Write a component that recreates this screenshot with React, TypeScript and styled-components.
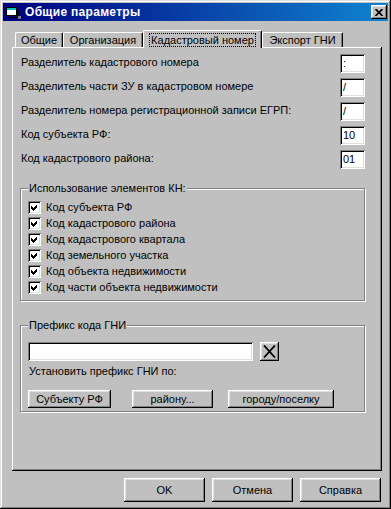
import styled, { createGlobalStyle } from 'styled-components'

const GlobalStyle = createGlobalStyle`
  html, body {
    margin: 0;
    padding: 0;
    background: #c0c0c0;
  }
  body {
    font-family: "Liberation Sans", Arial, sans-serif;
    font-size: 11px;
    color: #000;
  }
`

const raised = `
  box-shadow: inset -1px -1px 0 #000, inset 1px 1px 0 #fff,
    inset -2px -2px 0 #808080, inset 2px 2px 0 #dfdfdf;
`

const sunken = `
  box-shadow: inset 1px 1px 0 #808080, inset -1px -1px 0 #fff,
    inset 2px 2px 0 #000, inset -2px -2px 0 #dfdfdf;
`

const Window = styled.div`
  width: 391px;
  height: 509px;
  box-sizing: border-box;
  padding: 3px;
  background: #c0c0c0;
  box-shadow: inset -1px -1px 0 #000, inset 1px 1px 0 #dfdfdf,
    inset -2px -2px 0 #808080, inset 2px 2px 0 #fff;
  display: flex;
  flex-direction: column;
`

const TitleBar = styled.div`
  height: 18px;
  display: flex;
  align-items: center;
  padding: 0 1px 0 2px;
  background: linear-gradient(90deg, #000080, #1084d0);
  color: #fff;
`

const TitleText = styled.span`
  margin-left: 4px;
  font-weight: bold;
  font-size: 12px;
  letter-spacing: 0.3px;
`

const CloseButton = styled.div`
  margin-left: auto;
  width: 16px;
  height: 14px;
  background: #c0c0c0;
  ${raised}
  display: flex;
  align-items: center;
  justify-content: center;
`

const Body = styled.div`
  flex: 1;
  display: flex;
  flex-direction: column;
  padding: 9px 6px 0 9px;
`

const TabStrip = styled.div`
  height: 17px;
  display: flex;
  align-items: flex-end;
  padding-left: 3px;
  position: relative;
  z-index: 1;
`

const Tab = styled.div<{ $w: number; $active?: boolean }>`
  width: ${p => p.$w}px;
  box-sizing: border-box;
  height: ${p => (p.$active ? 18 : 15)}px;
  margin-bottom: ${p => (p.$active ? -1 : 0)}px;
  padding-top: ${p => (p.$active ? 2 : 0)}px;
  line-height: 14px;
  text-align: center;
  white-space: nowrap;
  background: #c0c0c0;
  border-top: 1px solid #fff;
  border-left: 1px solid #fff;
  border-right: 1px solid #000;
  border-radius: 2px 2px 0 0;
  box-shadow: inset -1px 0 0 #808080;
`

const FocusText = styled.span`
  outline: 1px dotted #000;
  padding: 0 1px;
`

const Panel = styled.div`
  width: 370px;
  height: 424px;
  box-sizing: border-box;
  padding: 7px 17px 0 8px;
  box-shadow: inset -1px -1px 0 #000, inset 1px 1px 0 #fff,
    inset -2px -2px 0 #808080;
  display: flex;
  flex-direction: column;
`

const FieldRow = styled.div`
  height: 24px;
  display: flex;
  align-items: flex-start;
  justify-content: space-between;
`

const FieldLabel = styled.span`
  padding: 2px 0 0 1px;
  line-height: 13px;
`

const SmallInput = styled.div`
  width: 25px;
  height: 19px;
  box-sizing: border-box;
  padding: 0 0 0 3px;
  line-height: 19px;
  color: #000;
  background: #fff;
  ${sunken}
`

const Group = styled.fieldset<{ $mt: number; $pt: number; $pb: number }>`
  margin: ${p => p.$mt}px 0 0 0;
  padding: ${p => p.$pt}px 7px ${p => p.$pb}px 7px;
  border: 1px solid #808080;
  box-shadow: 1px 1px 0 #fff, inset 1px 1px 0 #fff;
  min-width: 0;
`

const Legend = styled.legend`
  padding: 0 1px;
  line-height: 13px;
  background: #c0c0c0;
`

const CheckRow = styled.div`
  height: 16px;
  display: flex;
  align-items: center;
  gap: 5px;
`

const CheckBox = styled.div`
  width: 13px;
  height: 13px;
  background: #fff;
  ${sunken}
  display: flex;
`

const PrefixRow = styled.div`
  display: flex;
  gap: 7px;
`

const WideInput = styled.div`
  width: 225px;
  height: 19px;
  background: #fff;
  ${sunken}
`

const IconButton = styled.div`
  width: 19px;
  height: 19px;
  background: #c0c0c0;
  ${raised}
  display: flex;
  align-items: center;
  justify-content: center;
`

const Hint = styled.div`
  margin-top: 4px;
  padding-left: 1px;
  line-height: 13px;
`

const ButtonRow = styled.div`
  margin-top: 12px;
  display: flex;
`

const Button = styled.div<{ $w: number; $h: number; $ml?: number }>`
  width: ${p => p.$w}px;
  height: ${p => p.$h}px;
  margin-left: ${p => p.$ml ?? 0}px;
  line-height: ${p => p.$h}px;
  text-align: center;
  background: #c0c0c0;
  ${raised}
`

const Footer = styled.div`
  margin-top: 7px;
  display: flex;
  justify-content: flex-end;
  gap: 7px;
  padding-right: 1px;
`

const fields = [
  { label: 'Разделитель кадастрового номера', value: ':' },
  { label: 'Разделитель части ЗУ в кадастровом номере', value: '/' },
  { label: 'Разделитель номера регистрационной записи ЕГРП:', value: '/' },
  { label: 'Код субъекта РФ:', value: '10' },
  { label: 'Код кадастрового района:', value: '01' },
]

const checks = [
  'Код субъекта РФ',
  'Код кадастрового района',
  'Код кадастрового квартала',
  'Код земельного участка',
  'Код объекта недвижимости',
  'Код части объекта недвижимости',
]

const AppIcon = () => (
  <svg width="16" height="16" viewBox="0 0 16 16" shapeRendering="crispEdges">
    <rect x="1.5" y="3.5" width="10" height="8" fill="#fff" stroke="#000" />
    <rect x="2" y="4" width="9" height="2" fill="#00c0c0" />
    <path d="M4 13.5 H13.5 V6" stroke="#000" fill="none" />
    <rect x="13" y="12" width="3" height="3" fill="#808080" />
  </svg>
)

const Check = () => (
  <svg width="13" height="13" viewBox="0 0 13 13" shapeRendering="crispEdges">
    <polygon points="3,5 5,7 9,3 9,6 5,10 3,8" fill="#000" />
  </svg>
)

const App = () => (
  <>
    <GlobalStyle />
    <Window>
      <TitleBar>
        <AppIcon />
        <TitleText>Общие параметры</TitleText>
        <CloseButton>
          <svg width="8" height="7" viewBox="0 0 8 7">
            <path d="M0.5 0 L7.5 7 M7.5 0 L0.5 7" stroke="#000" strokeWidth="1.7" />
          </svg>
        </CloseButton>
      </TitleBar>
      <Body>
        <TabStrip>
          <Tab $w={48}>Общие</Tab>
          <Tab $w={80}>Организация</Tab>
          <Tab $w={119} $active>
            <FocusText>Кадастровый номер</FocusText>
          </Tab>
          <Tab $w={81}>Экспорт ГНИ</Tab>
        </TabStrip>
        <Panel>
          {fields.map(f => (
            <FieldRow key={f.label}>
              <FieldLabel>{f.label}</FieldLabel>
              <SmallInput>{f.value}</SmallInput>
            </FieldRow>
          ))}
          <Group $mt={8} $pt={4} $pb={5}>
            <Legend>Использование элементов КН:</Legend>
            {checks.map(c => (
              <CheckRow key={c}>
                <CheckBox>
                  <Check />
                </CheckBox>
                {c}
              </CheckRow>
            ))}
          </Group>
          <Group $mt={18} $pt={10} $pb={3}>
            <Legend>Префикс кода ГНИ</Legend>
            <PrefixRow>
              <WideInput />
              <IconButton>
                <svg width="13" height="13" viewBox="0 0 13 13">
                  <path d="M1 0.5 L12 12.5 M12 0.5 L1 12.5" stroke="#000" strokeWidth="1.8" />
                </svg>
              </IconButton>
            </PrefixRow>
            <Hint>Установить префикс ГНИ по:</Hint>
            <ButtonRow>
              <Button $w={83} $h={18}>Субъекту РФ</Button>
              <Button $w={81} $h={18} $ml={21}>району...</Button>
              <Button $w={106} $h={18} $ml={15}>городу/поселку</Button>
            </ButtonRow>
          </Group>
        </Panel>
        <Footer>
          <Button $w={81} $h={24}>OK</Button>
          <Button $w={81} $h={24}>Отмена</Button>
          <Button $w={81} $h={24}>Справка</Button>
        </Footer>
      </Body>
    </Window>
  </>
)

export default App
